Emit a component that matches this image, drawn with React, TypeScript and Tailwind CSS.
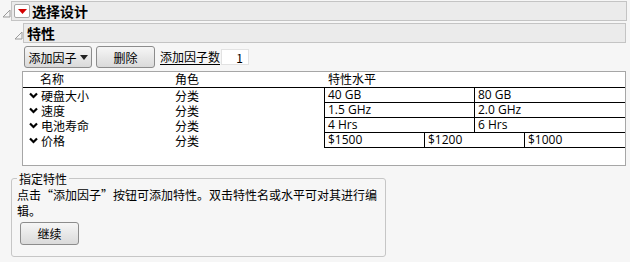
import React from "react";

const Tri = () => (
  <svg width="9" height="9" viewBox="0 0 9 9" className="shrink-0">
    <polygon points="8,1 8,8 1,8" fill="none" stroke="#9a9a9a" strokeWidth="1" />
  </svg>
);

const Chev = () => (
  <svg width="9" height="7" viewBox="0 0 9 7" className="shrink-0">
    <polyline points="1,1.5 4.5,5 8,1.5" fill="none" stroke="#000" strokeWidth="2.2" />
  </svg>
);

const btn =
  "flex items-center justify-center rounded-[3px] border border-[#8c8c8c] bg-gradient-to-b from-[#f6f6f6] to-[#dadada] text-[12px] text-black";

const rows = [
  { name: "硬盘大小", levels: ["40 GB", "80 GB"] },
  { name: "速度", levels: ["1.5 GHz", "2.0 GHz"] },
  { name: "电池寿命", levels: ["4 Hrs", "6 Hrs"] },
  { name: "价格", levels: ["$1500", "$1200", "$1000"] },
];

export default function App() {
  return (
    <div
      className="w-[630px] h-[262px] bg-[#f6f6f6] text-black text-[12px] leading-[15px] overflow-hidden"
      style={{ fontFamily: '"Noto Sans CJK SC", "Noto Sans", sans-serif' }}
    >
      {/* top bar */}
      <div className="flex items-center pt-[1px] pl-[2px]">
        <div className="w-[9px] mt-[5px]">
          <Tri />
        </div>
        <div className="w-[616px] h-[20px] border border-[#c4c4c4] bg-[#ebebeb] flex items-center">
          <div className="ml-[2px] w-[16px] h-[14px] rounded-[2px] border border-[#a8a8a8] bg-white flex items-center justify-center">
            <svg width="9" height="5" viewBox="0 0 9 5">
              <polygon points="0,0 9,0 4.5,5" fill="#d40000" />
            </svg>
          </div>
          <span className="ml-[2px] text-[14px] font-bold leading-[18px]">选择设计</span>
        </div>
      </div>
      {/* second bar */}
      <div className="flex items-center mt-[2px] pl-[14px]">
        <div className="w-[9px] mt-[5px]">
          <Tri />
        </div>
        <div className="w-[603px] h-[20px] border border-[#c4c4c4] bg-[#ebebeb] flex items-center">
          <span className="ml-[3px] text-[14px] font-bold leading-[18px]">特性</span>
        </div>
      </div>

      {/* buttons row */}
      <div className="flex items-center ml-[24px] mt-[3px] h-[22px]">
        <div className={btn + " w-[68px] h-[22px] gap-[3px]"}>
          <span>添加因子</span>
          <svg width="8" height="5" viewBox="0 0 8 5">
            <polygon points="0,0 8,0 4,5" fill="#222" />
          </svg>
        </div>
        <div className={btn + " ml-[4px] w-[59px] h-[22px]"}>删除</div>
        <span className="ml-[5px] border-b border-black leading-[14px]">添加因子数</span>
        <div className="ml-[1px] w-[28px] h-[16px] bg-white border border-[#e2e2e2] flex items-center justify-end pr-[5px]">1</div>
      </div>

      {/* table box */}
      <div className="ml-[22px] mt-[3px] w-[604px] h-[95px] border border-[#a6a6a6] bg-white">
        <div className="flex h-[16px] border-b border-black">
          <div className="w-[149px] pl-[17px] leading-[14px]">名称</div>
          <div className="w-[152px] pl-[3px] leading-[14px]">角色</div>
          <div className="pl-[4px] leading-[14px]">特性水平</div>
        </div>
        {rows.map((r, i) => (
          <div key={i} className="flex h-[15px]">
            <div className="w-[149px] flex items-center pl-[6px] gap-[3px]">
              <Chev />
              <span className="leading-[15px]">{r.name}</span>
            </div>
            <div className="w-[152px] pl-[3px] leading-[15px]">分类</div>
            <div className="flex flex-1 border-l border-b border-black">
              {r.levels.map((l, j) => (
                <div
                  key={j}
                  className={
                    (r.levels.length === 2 ? "w-[150px]" : "w-[100px]") +
                    " pl-[3px] leading-[14px] " +
                    (j < r.levels.length - 1 ? "border-r border-black" : "")
                  }
                  style={{ fontFamily: '"Open Sans", sans-serif' }}
                >
                  {l}
                </div>
              ))}
            </div>
          </div>
        ))}
      </div>

      {/* fieldset */}
      <fieldset className="ml-[11px] mt-[5px] w-[375px] h-[86px] border border-[#c6c6c6] rounded-[3px] p-0">
        <legend className="ml-[5px] px-[2px] leading-[15px]">指定特性</legend>
        <div className="pl-[5px] pr-[1px] pt-[1px]">
          <div className="leading-[16px]">
            点击“添加因子”按钮可添加特性。双击特性名或水平可对其进行编辑。
          </div>
          <div className={btn + " ml-[3px] mt-[3px] w-[59px] h-[23px]"}>继续</div>
        </div>
      </fieldset>
    </div>
  );
}
